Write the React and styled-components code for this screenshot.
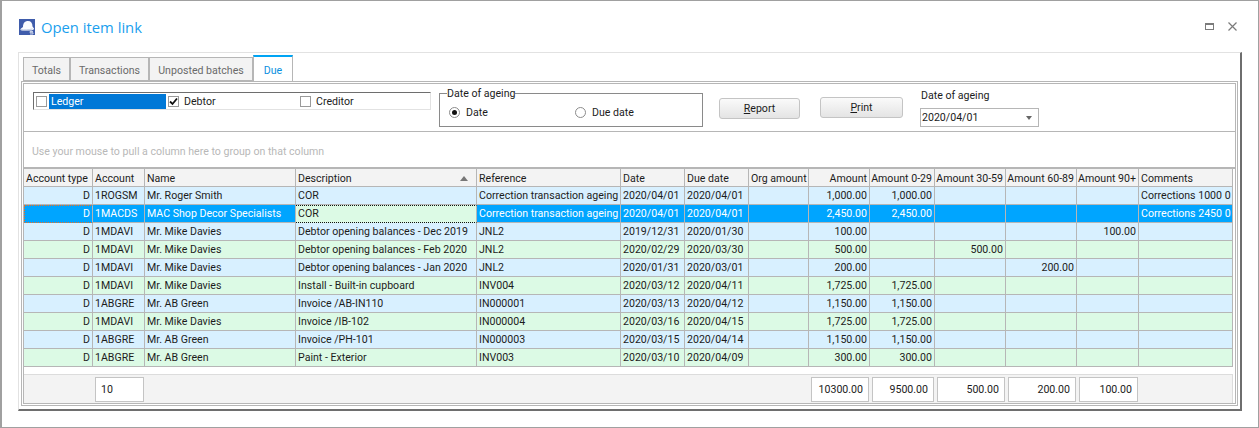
import React from 'react'
import styled, { createGlobalStyle } from 'styled-components'

const COLS = '69px 52px 151px 181px 144px 64px 64px 60px 61px 65px 71px 71px 62px 94px'

const GlobalStyle = createGlobalStyle`
  html, body { margin: 0; padding: 0; background: #fff; overflow: hidden; }
  body { font-family: Roboto, "Liberation Sans", Arial, sans-serif; font-size: 10.6px; color: #1c1c1c; }
`

const Window = styled.div`
  box-sizing: border-box;
  width: 1259px;
  height: 428px;
  border: 1px solid #a0a0a0;
  border-left-width: 2px;
  display: flex;
  flex-direction: column;
  background: #fff;
`

const TitleBar = styled.div`
  height: 51px;
  flex: none;
  display: flex;
  align-items: center;
  padding: 0 21px 0 17px;
  gap: 6px;
`

const Title = styled.div`
  font-family: "Open Sans", sans-serif;
  font-size: 14.8px;
  color: #1aa0ee;
  flex: 1;
`

const Panel = styled.div`
  box-sizing: border-box;
  width: 1224px;
  height: 359px;
  margin-left: 16px;
  border-top: 1px solid #e2e2e2;
  border-left: 1px solid #e2e2e2;
  border-right: 2px solid #6e6e6e;
  border-bottom: 2px solid #6e6e6e;
  padding: 4px 2px 3px 2px;
  display: flex;
  flex-direction: column;
`

const Tabs = styled.div`
  display: flex;
  height: 24px;
  padding-left: 2px;
  flex: none;
`

const Tab = styled.div`
  box-sizing: border-box;
  width: ${p => p.$w}px;
  height: ${p => (p.$active ? 26 : 24)}px;
  margin-top: ${p => (p.$active ? -2 : 0)}px;
  margin-bottom: ${p => (p.$active ? -1 : 0)}px;
  padding-top: 2px;
  background: ${p => (p.$active ? '#fff' : '#f3f3f3')};
  color: ${p => (p.$active ? '#0a8fe0' : '#6a6a6a')};
  border: 1px solid #b6b6b6;
  border-top: ${p => (p.$active ? '2px solid #00a4f4' : '1px solid #b6b6b6')};
  border-bottom: ${p => (p.$active ? 'none' : '1px solid #b6b6b6')};
  display: flex;
  align-items: center;
  justify-content: center;
  position: relative;
  z-index: 1;
`

const TabBody = styled.div`
  flex: 1;
  min-height: 0;
  border: 1px solid #b6b6b6;
  padding: 1px;
  display: flex;
`

const Inner = styled.div`
  flex: 1;
  border: 1px solid #b6b6b6;
  display: flex;
  flex-direction: column;
  min-width: 0;
`

const TopBar = styled.div`
  box-sizing: border-box;
  height: 48px;
  flex: none;
  border-bottom: 1px solid #b6b6b6;
  display: flex;
  align-items: flex-start;
  padding: 8px 0 0 9px;
`

const CheckList = styled.div`
  box-sizing: border-box;
  width: 398px;
  height: 18px;
  border: 1px solid #e2e2e2;
  border-top: 1px solid #6e6e6e;
  border-left: 1px solid #6e6e6e;
  display: flex;
  align-items: center;
`

const CheckItem = styled.div`
  width: ${p => p.$w}px;
  flex: none;
  display: flex;
  align-items: center;
  padding-left: 2px;
  box-sizing: border-box;
  height: 15px;
`

const Box = styled.span`
  box-sizing: border-box;
  width: 11px;
  height: 11px;
  border: 1px solid #9a9a9a;
  background: #fff;
  display: flex;
  align-items: center;
  justify-content: center;
  flex: none;
`

const CheckLabel = styled.span`
  flex: 1;
  height: 15px;
  line-height: 15px;
  margin-left: ${p => (p.$selected ? 2 : 5)}px;
  padding-left: ${p => (p.$selected ? 2 : 0)}px;
  background: ${p => (p.$selected ? '#0078d7' : 'transparent')};
  color: ${p => (p.$selected ? '#fff' : '#1c1c1c')};
`

const Group = styled.fieldset`
  box-sizing: border-box;
  width: 264px;
  height: 39px;
  margin: -4px 0 0 8px;
  padding: 0 0 0 9px;
  border: 1px solid #8a8a8a;
  display: flex;
  align-items: center;
`

const Legend = styled.legend`
  padding: 0;
  margin-left: -2px;
  background: #fff;
  line-height: 11px;
`

const RadioRow = styled.label`
  display: flex;
  align-items: center;
  gap: 6px;
  width: ${p => p.$w}px;
  margin-top: -1px;
`

const Radio = styled.span`
  box-sizing: border-box;
  width: 11px;
  height: 11px;
  border-radius: 50%;
  border: 1px solid #8c8c8c;
  background: #fff;
  display: flex;
  align-items: center;
  justify-content: center;
  &::after {
    content: '';
    width: 5px;
    height: 5px;
    border-radius: 50%;
    background: ${p => (p.$on ? '#111' : 'transparent')};
  }
`

const Button = styled.button`
  box-sizing: border-box;
  width: ${p => p.$w}px;
  height: 21px;
  margin: ${p => p.$top}px 0 0 ${p => p.$left}px;
  padding: 0;
  border: 1px solid #c4c4c4;
  border-radius: 3px;
  background: linear-gradient(#fafafa, #e4e4e4);
  font: inherit;
  color: #1c1c1c;
  u { text-decoration: underline; }
`

const DateField = styled.div`
  margin: -3px 0 0 17px;
  display: flex;
  flex-direction: column;
`

const DateLabel = styled.div`
  line-height: 14px;
  margin-left: 1px;
  margin-bottom: 5px;
`

const Select = styled.div`
  box-sizing: border-box;
  width: 119px;
  height: 19px;
  border: 1px solid #b6b6b6;
  display: flex;
  align-items: center;
  justify-content: space-between;
  padding: 0 6px 0 1px;
  &::after {
    content: '';
    border-left: 3.5px solid transparent;
    border-right: 3.5px solid transparent;
    border-top: 4px solid #666;
  }
`

const GroupHint = styled.div`
  height: 35px;
  flex: none;
  color: #b8b8b8;
  padding: 13px 0 0 8px;
  box-sizing: border-box;
  line-height: 13px;
`

const GridWrap = styled.div`
  border-top: 2px solid #b6b6b6;
  flex: none;
`

const Row = styled.div`
  display: grid;
  width: 1209px;
  grid-template-columns: ${COLS};
  height: 18px;
  background: ${p => (p.$selected ? '#00a5ff' : p.$green ? '#dcfae5' : '#d8f0ff')};
  color: ${p => (p.$selected ? '#fff' : '#1c1c1c')};
`

const HeadRow = styled(Row)`
  background: #f3f3f3;
  height: 18px;
`

const Cell = styled.div`
  box-sizing: border-box;
  border-right: 1px solid #b6b6b6;
  border-bottom: 1px solid #b6b6b6;
  padding: 0 2px;
  line-height: 17px;
  white-space: nowrap;
  overflow: hidden;
  text-align: ${p => (p.$right ? 'right' : 'left')};
`

const FocusCell = styled(Cell)`
  background: #dcfae5;
  color: #1c1c1c;
  border-top: 1px dotted #111;
  border-bottom: 1px dotted #111;
  line-height: 15px;
`

const StartCell = styled(Cell)`
  border-left: 1px dotted #f07020;
  border-top: 1px dotted #f07020;
  border-bottom: 1px dotted #f07020;
  line-height: 15px;
`

const HeadCell = styled(Cell)`
  display: flex;
  align-items: center;
  padding-top: 1px;
  justify-content: ${p => (p.$right ? 'flex-end' : 'space-between')};
`

const SortArrow = styled.span`
  margin-right: 6px;
  border-left: 4.5px solid transparent;
  border-right: 4.5px solid transparent;
  border-bottom: 5px solid #777;
`

const Footer = styled.div`
  box-sizing: border-box;
  width: 1209px;
  height: 30px;
  margin-top: 7px;
  background: #f3f3f3;
  border-top: 1px solid #dcdcdc;
  border-right: 1px solid #dcdcdc;
  display: grid;
  grid-template-columns: ${COLS};
  align-items: start;
  padding-top: 2px;
`

const Total = styled.div`
  box-sizing: border-box;
  grid-column: ${p => p.$col};
  height: 25px;
  margin: 0 1px 0 2px;
  background: #fff;
  border: 1px solid #c4c4c4;
  line-height: 23px;
  padding: 0 5px;
  text-align: ${p => (p.$left ? 'left' : 'right')};
`

const Controls = styled.div`
  display: flex;
  align-items: center;
  gap: 14px;
`

const columns = [
  ['Account type'], ['Account'], ['Name'], ['Description'], ['Reference'], ['Date'], ['Due date'],
  ['Org amount'], ['Amount', true], ['Amount 0-29', true], ['Amount 30-59', true], ['Amount 60-89', true],
  ['Amount 90+', true], ['Comments'],
]

const RIGHT = [0, 8, 9, 10, 11, 12]

const CT = 'Correction transaction ageing'
const OB = 'Debtor opening balances'
const rows = [
  ['D', '1ROGSM', 'Mr. Roger Smith', 'COR', CT, '2020/04/01', '2020/04/01', '', '1,000.00', '1,000.00', '', '', '', 'Corrections 1000 0'],
  ['D', '1MACDS', 'MAC Shop Decor Specialists', 'COR', CT, '2020/04/01', '2020/04/01', '', '2,450.00', '2,450.00', '', '', '', 'Corrections 2450 0'],
  ['D', '1MDAVI', 'Mr. Mike Davies', `${OB} - Dec 2019`, 'JNL2', '2019/12/31', '2020/01/30', '', '100.00', '', '', '', '100.00', ''],
  ['D', '1MDAVI', 'Mr. Mike Davies', `${OB} - Feb 2020`, 'JNL2', '2020/02/29', '2020/03/30', '', '500.00', '', '500.00', '', '', ''],
  ['D', '1MDAVI', 'Mr. Mike Davies', `${OB} - Jan 2020`, 'JNL2', '2020/01/31', '2020/03/01', '', '200.00', '', '', '200.00', '', ''],
  ['D', '1MDAVI', 'Mr. Mike Davies', 'Install - Built-in cupboard', 'INV004', '2020/03/12', '2020/04/11', '', '1,725.00', '1,725.00', '', '', '', ''],
  ['D', '1ABGRE', 'Mr. AB Green', 'Invoice /AB-IN110', 'IN000001', '2020/03/13', '2020/04/12', '', '1,150.00', '1,150.00', '', '', '', ''],
  ['D', '1MDAVI', 'Mr. Mike Davies', 'Invoice /IB-102', 'IN000004', '2020/03/16', '2020/04/15', '', '1,725.00', '1,725.00', '', '', '', ''],
  ['D', '1ABGRE', 'Mr. AB Green', 'Invoice /PH-101', 'IN000003', '2020/03/15', '2020/04/14', '', '1,150.00', '1,150.00', '', '', '', ''],
  ['D', '1ABGRE', 'Mr. AB Green', 'Paint - Exterior', 'INV003', '2020/03/10', '2020/04/09', '', '300.00', '300.00', '', '', '', ''],
]

const totals = [
  [9, '10300.00'], [10, '9500.00'], [11, '500.00'], [12, '200.00'], [13, '100.00'],
]

const AppIcon = () => (
  <svg width="16" height="16" viewBox="0 0 16 16">
    <rect width="16" height="16" fill="#3f5cab" />
    <path d="M4 8C4 4 6 2 9 2C12 2 13.500 4 13.500 7.500L15 9.500C15 11 13 11.500 11 11.500L3 11.500C1.500 11.500 1 10.500 2 9.500Z" fill="#fbfcff" />
    <path d="M2 10.500C5 11 9 11 13.500 10" stroke="#c5cfe6" strokeWidth="1" fill="none" />
    <path d="M14 12.500h-3v1.200h3v1.300h-3" stroke="#d5dcee" strokeWidth="0.900" fill="none" />
  </svg>
)

const MaxIcon = () => (
  <svg width="9" height="7" viewBox="0 0 9 7">
    <rect x="0.500" y="0.500" width="8" height="6" fill="none" stroke="#7b7b7b" />
    <path d="M0 1.500h9" stroke="#7b7b7b" />
  </svg>
)

const CloseIcon = () => (
  <svg width="9" height="9" viewBox="0 0 9 9">
    <path d="M0.500 0.500l8 8M8.500 0.500l-8 8" stroke="#7b7b7b" strokeWidth="1.200" />
  </svg>
)

const Tick = () => (
  <svg width="9" height="9" viewBox="0 0 9 9">
    <path d="M1 4.500l2.500 2.500L8 1.500" stroke="#111" strokeWidth="1.800" fill="none" />
  </svg>
)

const renderCell = (val, i, rowIdx) => {
  if (rowIdx === 1 && i === 3) return <FocusCell key={i}>{val}</FocusCell>
  if (rowIdx === 1 && i === 0) return <StartCell key={i} $right>{val}</StartCell>
  return <Cell key={i} $right={RIGHT.includes(i)}>{val}</Cell>
}

export default function App() {
  return (
    <>
      <GlobalStyle />
      <Window>
        <TitleBar>
          <AppIcon />
          <Title>Open item link</Title>
          <Controls>
            <MaxIcon />
            <CloseIcon />
          </Controls>
        </TitleBar>
        <Panel>
          <Tabs>
            <Tab $w={47}>Totals</Tab>
            <Tab $w={79}>Transactions</Tab>
            <Tab $w={104}>Unposted batches</Tab>
            <Tab $w={40} $active>Due</Tab>
          </Tabs>
          <TabBody>
            <Inner>
              <TopBar>
                <CheckList>
                  <CheckItem $w={132}>
                    <Box />
                    <CheckLabel $selected>Ledger</CheckLabel>
                  </CheckItem>
                  <CheckItem $w={132}>
                    <Box><Tick /></Box>
                    <CheckLabel>Debtor</CheckLabel>
                  </CheckItem>
                  <CheckItem $w={130}>
                    <Box />
                    <CheckLabel>Creditor</CheckLabel>
                  </CheckItem>
                </CheckList>
                <Group>
                  <Legend>Date of ageing</Legend>
                  <RadioRow $w={126}><Radio $on />Date</RadioRow>
                  <RadioRow $w={110}><Radio />Due date</RadioRow>
                </Group>
                <Button $w={81} $left={16} $top={6}><u>R</u>eport</Button>
                <Button $w={83} $left={20} $top={5}><u>P</u>rint</Button>
                <DateField>
                  <DateLabel>Date of ageing</DateLabel>
                  <Select>2020/04/01</Select>
                </DateField>
              </TopBar>
              <GroupHint>Use your mouse to pull a column here to group on that column</GroupHint>
              <GridWrap>
                <HeadRow>
                  {columns.map(([label, right], i) => (
                    <HeadCell key={label} $right={right}>
                      {label}
                      {i === 3 && <SortArrow />}
                    </HeadCell>
                  ))}
                </HeadRow>
                {rows.map((row, r) => (
                  <Row key={r} $green={r % 2 === 1} $selected={r === 1}>
                    {row.map((val, i) => renderCell(val, i, r))}
                  </Row>
                ))}
              </GridWrap>
              <Footer>
                <Total $col={2} $left>10</Total>
                {totals.map(([col, val]) => (
                  <Total key={col} $col={col}>{val}</Total>
                ))}
              </Footer>
            </Inner>
          </TabBody>
        </Panel>
      </Window>
    </>
  )
}
